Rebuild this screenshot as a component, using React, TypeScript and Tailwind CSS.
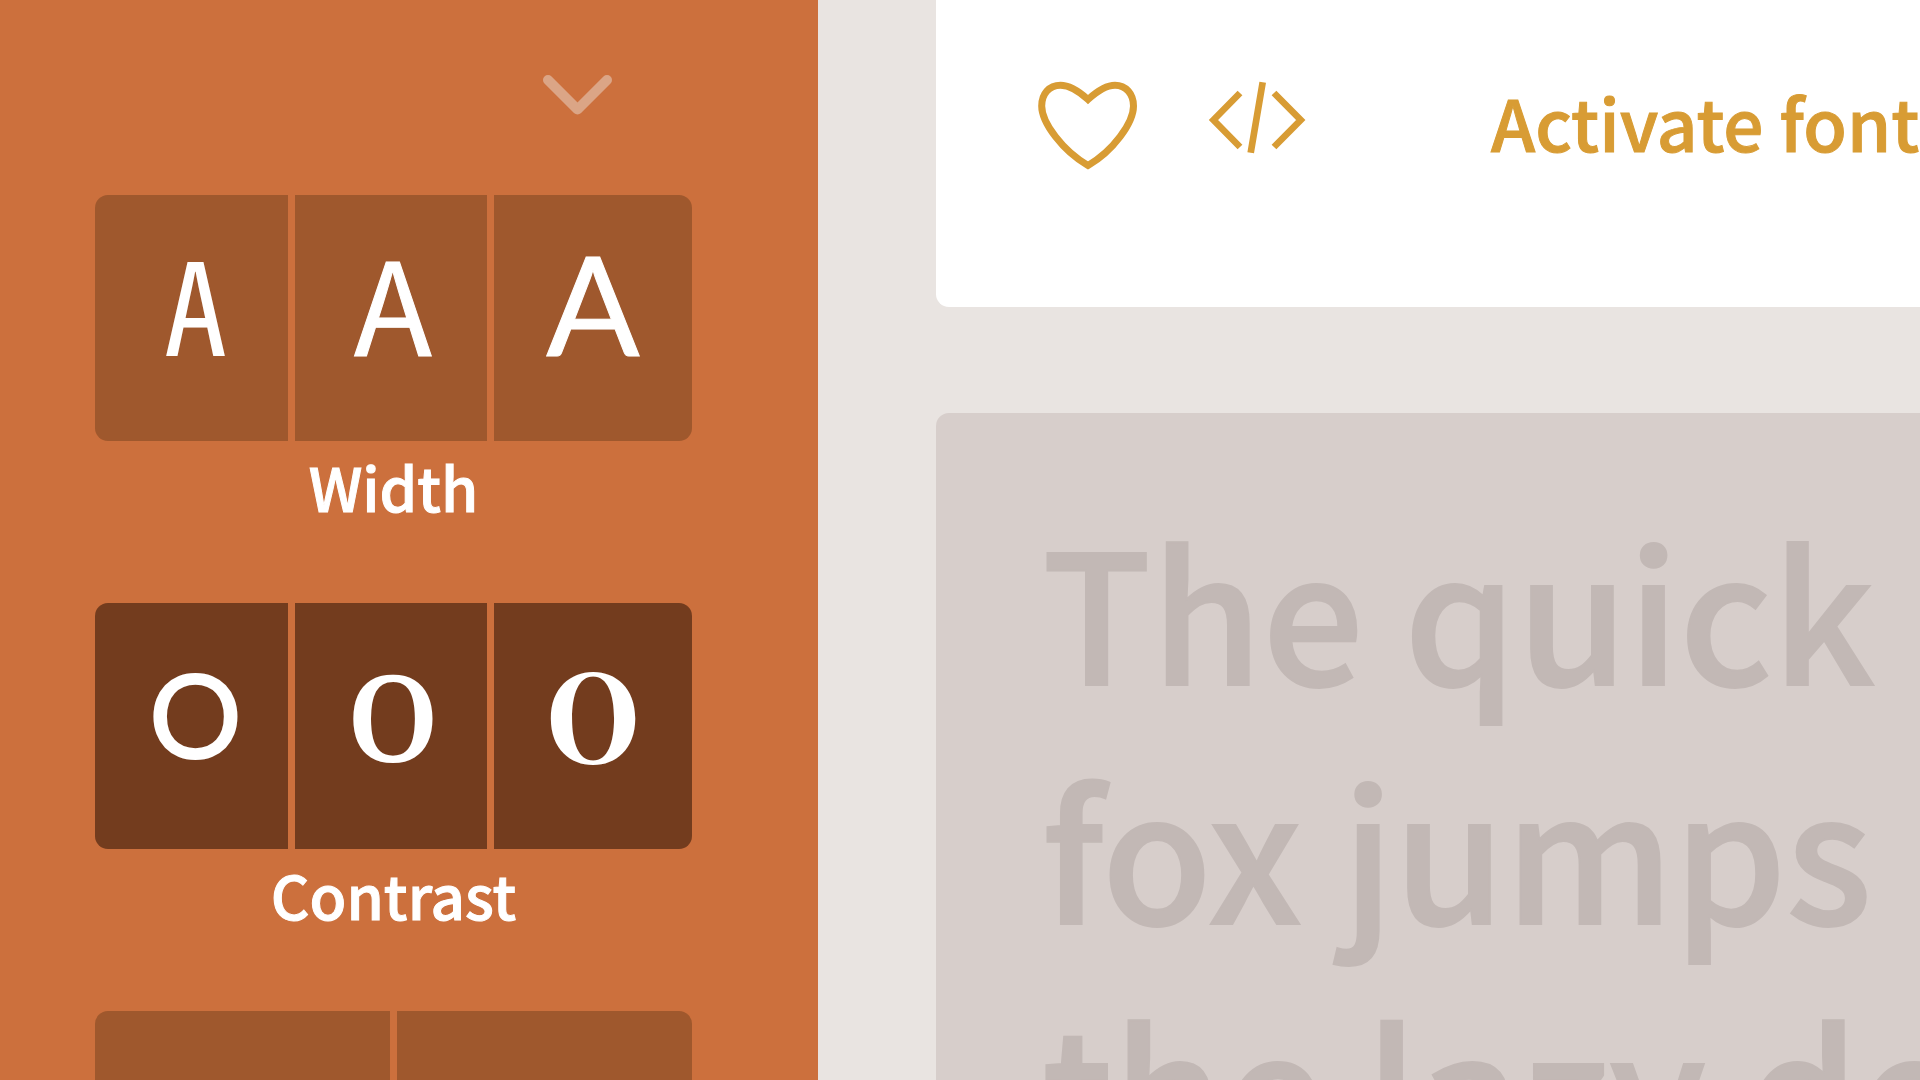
type Option = { name: string; glyph: string; className: string };

const widthOptions: Option[] = [
  { name: "Condensed", glyph: "A", className: "pl-2 text-[128px] leading-[212px] font-['Noto_Sans_Mono_CJK_SC',monospace]" },
  { name: "Regular", glyph: "A", className: "pl-1 text-[128px] leading-[212px] [-webkit-text-stroke:1px_white] font-['Noto_Sans_CJK_SC',sans-serif]" },
  { name: "Extended", glyph: "A", className: "text-[138px] leading-[216px] [-webkit-text-stroke:1px_white] font-['Lato',sans-serif]" },
];

const contrastOptions: Option[] = [
  { name: "Low", glyph: "O", className: "pl-2 text-[116px] leading-[222px] [-webkit-text-stroke:2px_white] font-['Lato',sans-serif]" },
  { name: "Medium", glyph: "O", className: "pl-1 text-[120px] leading-[226px] font-semibold font-['Noto_Serif',serif]" },
  { name: "High", glyph: "O", className: "text-[119px] leading-[217px] font-black font-['Noto_Serif_CJK_SC',serif]" },
];

function OptionGroup({ label, options, tone }: { label: string; options: Option[]; tone: string }) {
  return (
    <section aria-label={label} className="mb-[72px]">
      <div className="grid h-[246px] grid-cols-[193fr_192fr_198fr] gap-[7px] overflow-hidden rounded-[13px]">
        {options.map((o) => (
          <button key={o.name} type="button" aria-label={o.name} className={`flex items-start justify-center ${tone} ${o.className}`}>
            {o.glyph}
          </button>
        ))}
      </div>
      <h2 className="text-center text-[60px] leading-[90px] font-medium [-webkit-text-stroke:1px_white]">{label}</h2>
    </section>
  );
}

function Sidebar() {
  return (
    <aside className="w-[818px] shrink-0 bg-[#cc703d] pr-[126px] pl-[95px] text-white">
      <div className="flex h-[195px] items-start justify-end pt-[75px] pr-20">
        <button type="button" aria-label="Collapse" className="text-[#dba586]">
          <svg width="70" height="40" viewBox="0 0 70 40" fill="none" stroke="currentColor" strokeWidth="10" strokeLinecap="round" strokeLinejoin="round">
            <path d="M6 5 35.500 34.500 65 5" />
          </svg>
        </button>
      </div>
      <OptionGroup label="Width" options={widthOptions} tone="bg-[#9f582d]" />
      <OptionGroup label="Contrast" options={contrastOptions} tone="bg-[#733c1e]" />
      <div className="grid h-[246px] grid-cols-2 gap-[7px] overflow-hidden rounded-[13px]">
        <button type="button" aria-label="Option one" className="bg-[#9f582d]" />
        <button type="button" aria-label="Option two" className="bg-[#9f582d]" />
      </div>
    </aside>
  );
}

function Toolbar() {
  return (
    <header className="flex h-[307px] shrink-0 items-start rounded-bl-[13px] bg-white pt-[81px] pl-[102px] text-[#d89c34]">
      <button type="button" aria-label="Favorite" className="shrink-0">
        <svg width="100" height="90" viewBox="38 21 100 90" fill="none" stroke="currentColor" strokeWidth="7">
          <path d="M88 39.500C78 30.500 69 25.300 60.500 25.300C49 25.300 41.700 34 41.700 46C41.700 63 63 91 88 105.500C113 91 133.500 63 133.500 46C133.500 34 126 25.300 115 25.300C106.500 25.300 98 30.500 88 39.500Z" />
        </svg>
      </button>
      <button type="button" aria-label="Embed code" className="ml-[70px] shrink-0">
        <svg width="98" height="73" viewBox="208 21 98 73" fill="none" stroke="currentColor" strokeWidth="6.700">
          <path d="M240 33 213.500 60 240 87M274 33 300.700 60 274 87M262.700 22.300 250.700 92.700" />
        </svg>
      </button>
      <button type="button" className="ml-[185px] text-[71px] leading-[80px] font-medium whitespace-nowrap [-webkit-text-stroke:1px_#d89c34]">
        Activate font
      </button>
    </header>
  );
}

export default function App() {
  return (
    <div className="flex h-screen overflow-hidden bg-[#e9e4e1] font-['Noto_Sans_CJK_SC',sans-serif]">
      <Sidebar />
      <main className="ml-[118px] flex min-w-0 flex-1 flex-col gap-[106px]">
        <Toolbar />
        <section className="flex-1 rounded-tl-[13px] bg-[#d7cecb] pt-[75px] pl-[106px]">
          <p className="text-[179px] leading-[239px] font-medium whitespace-nowrap text-[#c2b8b5] [-webkit-text-stroke:2px_#c2b8b5]">
            The quick
            <br />
            fox jumps
            <br />
            the lazy do
          </p>
        </section>
      </main>
    </div>
  );
}
